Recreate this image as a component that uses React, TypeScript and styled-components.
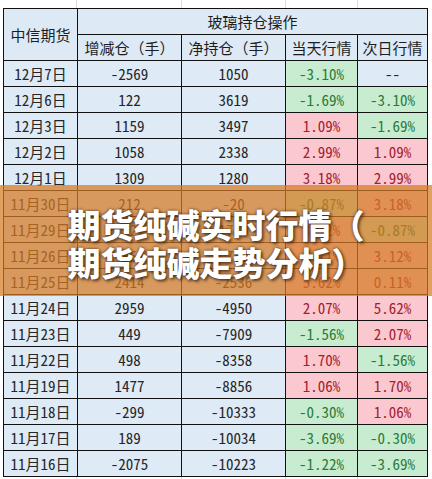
import React from "react";
import styled, { createGlobalStyle } from "styled-components";

// 玻璃持仓数据
type Tone = "blue" | "green" | "red";
type Row = { date: string; change: string; hold: string; today: string; next: string };

const rows: Row[] = [
  { date: "12月7日", change: "-2569", hold: "1050", today: "-3.10%", next: "--" },
  { date: "12月6日", change: "122", hold: "3619", today: "-1.69%", next: "-3.10%" },
  { date: "12月3日", change: "1159", hold: "3497", today: "1.09%", next: "-1.69%" },
  { date: "12月2日", change: "1058", hold: "2338", today: "2.99%", next: "1.09%" },
  { date: "12月1日", change: "1309", hold: "1280", today: "3.18%", next: "2.99%" },
  { date: "11月30日", change: "212", hold: "-20", today: "-0.87%", next: "3.18%" },
  { date: "11月29日", change: "1121", hold: "1730", today: "3.12%", next: "-0.87%" },
  { date: "11月26日", change: "-858", hold: "-758", today: "0.11%", next: "3.12%" },
  { date: "11月25日", change: "2414", hold: "-2536", today: "5.62%", next: "0.11%" },
  { date: "11月24日", change: "2959", hold: "-4950", today: "2.07%", next: "5.62%" },
  { date: "11月23日", change: "449", hold: "-7909", today: "-1.56%", next: "2.07%" },
  { date: "11月22日", change: "498", hold: "-8358", today: "1.70%", next: "-1.56%" },
  { date: "11月19日", change: "1477", hold: "-8856", today: "1.06%", next: "1.70%" },
  { date: "11月18日", change: "-299", hold: "-10333", today: "-0.30%", next: "1.06%" },
  { date: "11月17日", change: "189", hold: "-10034", today: "-3.69%", next: "-0.30%" },
  { date: "11月16日", change: "-2075", hold: "-10223", today: "-1.22%", next: "-3.69%" },
];

const toneOf = (v: string): Tone => {
  if (v === "--") return "blue";
  return v.startsWith("-") ? "green" : "red";
};

const GlobalStyle = createGlobalStyle`
  html, body {
    margin: 0;
    padding: 0;
    background: #ffffff;
  }
  body {
    width: 432px;
    height: 479px;
    overflow: hidden;
  }
`;

// fond blanc avec le quadrillage léger du tableur
const Page = styled.div`
  position: relative;
  width: 432px;
  height: 479px;
  padding: 8px 5px 0 3px;
  box-sizing: border-box;
  background-color: #ffffff;
  background-image: linear-gradient(to right, transparent 76px, #dcdcdc 76px, #dcdcdc 77px, transparent 77px),
    linear-gradient(to right, transparent 181px, #dcdcdc 181px, #dcdcdc 182px, transparent 182px),
    linear-gradient(to right, transparent 285px, #dcdcdc 285px, #dcdcdc 286px, transparent 286px),
    linear-gradient(to right, transparent 357px, #dcdcdc 357px, #dcdcdc 358px, transparent 358px);
  font-family: "Noto Sans Mono CJK SC", "Noto Sans CJK SC", sans-serif;
`;

const Table = styled.table`
  border-collapse: collapse;
  table-layout: fixed;
  width: 424px;
  font-size: 15px;
  color: #1e1e1e;
`;

const HeadCell = styled.th`
  height: 25px;
  padding: 0;
  border: 1px solid #111;
  background-color: #dde9f5;
  font-weight: normal;
  text-align: center;
  white-space: nowrap;
  line-height: 25px;
`;

const palette: Record<Tone, { bg: string; fg: string }> = {
  blue: { bg: "#deeaf6", fg: "#262626" },
  green: { bg: "#c8ecd0", fg: "#2c7a39" },
  red: { bg: "#fcc8cf", fg: "#a2202e" },
};

const Cell = styled.td<{ $tone: Tone }>`
  height: 25px;
  padding: 0;
  border: 1px solid #111;
  background-color: ${(p) => palette[p.$tone].bg};
  color: ${(p) => palette[p.$tone].fg};
  text-align: center;
  white-space: nowrap;
  line-height: 25px;
`;

const Banner = styled.div`
  position: absolute;
  left: 0;
  right: 0;
  top: 185px;
  height: 111px;
  background-color: rgba(214, 122, 34, 0.72);
  display: flex;
  align-items: center;
  justify-content: center;
`;

const BannerTitle = styled.h1`
  margin: 0;
  padding-top: 4px;
  font-family: "Noto Sans CJK SC", sans-serif;
  font-weight: 900;
  font-size: 33px;
  line-height: 38px;
  color: #ffffff;
  text-align: center;
  text-shadow: 0 0 3px rgba(50, 30, 15, 0.9), 2px 2px 3px rgba(50, 30, 15, 0.6);
`;

export default function App() {
  return (
    <Page>
      <GlobalStyle />
      <Table>
        <colgroup>
          <col style={{ width: 74 }} />
          <col style={{ width: 104 }} />
          <col style={{ width: 104 }} />
          <col style={{ width: 72 }} />
          <col style={{ width: 70 }} />
        </colgroup>
        <thead>
          <tr>
            <HeadCell rowSpan={2}>中信期货</HeadCell>
            <HeadCell colSpan={4}>玻璃持仓操作</HeadCell>
          </tr>
          <tr>
            <HeadCell>增减仓（手）</HeadCell>
            <HeadCell>净持仓（手）</HeadCell>
            <HeadCell>当天行情</HeadCell>
            <HeadCell>次日行情</HeadCell>
          </tr>
        </thead>
        <tbody>
          {rows.map((r) => (
            <tr key={r.date}>
              <Cell $tone="blue">{r.date}</Cell>
              <Cell $tone="blue">{r.change}</Cell>
              <Cell $tone="blue">{r.hold}</Cell>
              <Cell $tone={toneOf(r.today)}>{r.today}</Cell>
              <Cell $tone={toneOf(r.next)}>{r.next}</Cell>
            </tr>
          ))}
        </tbody>
      </Table>
      <Banner>
        <BannerTitle>
          期货纯碱实时行情（
          <br />
          期货纯碱走势分析）
        </BannerTitle>
      </Banner>
    </Page>
  );
}
